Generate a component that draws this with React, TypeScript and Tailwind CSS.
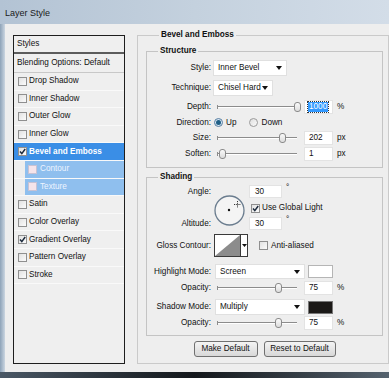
import React from 'react';

const STYLE_ROWS = [
  { name: 'Drop Shadow' },
  { name: 'Inner Shadow' },
  { name: 'Outer Glow' },
  { name: 'Inner Glow' },
  { name: 'Bevel and Emboss', checked: true, active: true },
  { name: 'Contour', sub: true },
  { name: 'Texture', sub: true },
  { name: 'Satin' },
  { name: 'Color Overlay' },
  { name: 'Gradient Overlay', checked: true },
  { name: 'Pattern Overlay' },
  { name: 'Stroke' },
];

function CheckBox({ checked = false, sub = false }: { checked?: boolean; sub?: boolean }) {
  return (
    <span
      className={`flex h-[9px] w-[9px] shrink-0 items-center justify-center border ${
        sub ? 'border-[#c7c2d4] bg-[#f5e4ea]' : 'border-[#8f8f8f] bg-gradient-to-br from-[#e2e2e2] to-[#fbfbfb]'
      }`}
    >
      {checked && (
        <svg width="7" height="7" viewBox="0 0 7 7">
          <path d="M1 3.6 L2.8 5.6 L6.2 1" fill="none" stroke="#1c2a3c" strokeWidth="1.5" />
        </svg>
      )}
    </span>
  );
}

function Radio({ on = false }: { on?: boolean }) {
  return (
    <span
      className={`flex h-[9px] w-[9px] shrink-0 items-center justify-center rounded-full border ${
        on ? 'border-[#5a7fa0] bg-[#d6e6f4]' : 'border-[#9a9a9a] bg-gradient-to-br from-[#dedede] to-[#fafafa]'
      }`}
    >
      {on && <span className="h-[5px] w-[5px] rounded-full bg-[#1f5f86]" />}
    </span>
  );
}

function Select({ value, width }: { value: string; width: string }) {
  return (
    <div className={`flex h-full items-center justify-between border border-[#e0e0e0] bg-white pl-[4px] pr-[4px] ${width}`}>
      <span>{value}</span>
      <svg width="6" height="4" viewBox="0 0 6 4">
        <path d="M0 0 H6 L3 4 Z" fill="#111" />
      </svg>
    </div>
  );
}

function Slider({ pos }: { pos: number }) {
  return (
    <div className="relative ml-[6px] h-full w-[80px]">
      <div className="absolute left-0 right-0 top-1/2 h-[2px] -translate-y-1/2 border-t border-[#8c8c8c] bg-white" />
      <div className="absolute left-0 top-1/2 h-[4px] w-[1px] -translate-y-1/2 bg-[#8c8c8c]" />
      <span
        className="absolute top-1/2 h-[10px] w-[7px] -translate-y-1/2 rounded-[3px] border border-[#8a8a8a] bg-gradient-to-b from-[#fafafa] to-[#dcdcdc]"
        style={{ left: pos - 3.5 }}
      />
    </div>
  );
}

function NumBox({ value, unit, selected = false }: { value: string; unit: string; selected?: boolean }) {
  return (
    <>
      <div className="ml-[7px] flex h-[14px] w-[29px] items-center border border-[#e3e3e3] bg-white pl-[3px]">
        <span className={selected ? 'bg-[#3399ff] px-[1px] text-white outline outline-1 outline-dotted outline-[#333]' : 'pl-[1px]'}>
          {value}
        </span>
      </div>
      <span className="ml-[4px]">{unit}</span>
    </>
  );
}

function Label({ children }: { children: React.ReactNode }) {
  return <span className="w-[64px] shrink-0 text-right">{children}</span>;
}

export default function App() {
  return (
    <div className="h-[378px] w-[389px] overflow-hidden bg-[#eeeeee] font-['Liberation_Sans',Arial,sans-serif] text-[8.2px] leading-[10px] text-[#111]">
      <div className="flex h-[24px] items-center bg-gradient-to-r from-[#b3c3d4] via-[#c4d1de] to-[#d3dde8] pl-[5px] text-[9px] text-[#1a1a1a]">
        <span className="mt-[2px]">Layer Style</span>
      </div>

      <div className="flex h-[348px]">
        <div className="w-[5px] shrink-0 bg-gradient-to-r from-[#8ea3b8] to-[#cbd6e1]" />

        {/* styles list */}
        <div className="ml-[8px] mt-[11px] flex h-[329px] w-[112px] shrink-0 flex-col border border-[#1e1e1e] bg-[#efefef]">
          <div className="flex h-[18px] shrink-0 items-center border-b-2 border-[#5c5c5c] pl-[3px]">Styles</div>
          <div className="flex h-[19px] shrink-0 items-center border-b border-[#c8c8c8] pl-[3px]">Blending Options: Default</div>
          {STYLE_ROWS.map((row) => (
            <div key={row.name} className={`h-[17.6px] shrink-0 border-b border-[#f9f9f9] ${row.sub ? 'bg-[#eeeeee] pl-[11px]' : ''}`}>
              <div
                className={`flex h-full items-center gap-[2px] ${
                  row.active ? 'bg-[#3a8ee6] pl-[4px] font-bold text-white' : row.sub ? 'bg-[#8fbfee] pl-[3px] text-[#eef4ff]' : 'pl-[4px]'
                }`}
              >
                <CheckBox checked={row.checked} sub={row.sub} />
                <span className={row.sub ? 'ml-[1px]' : ''}>{row.name}</span>
              </div>
            </div>
          ))}
        </div>

        <fieldset className="ml-[12px] mt-[6px] h-[334px] w-[252px] shrink-0 border border-[#cacaca] pl-[8px] pr-[5px]">
          <legend className="ml-[13px] px-[2px] font-bold">Bevel and Emboss</legend>

          <fieldset className="mt-[6px] h-[122px] border border-[#c4c4c4]">
            <legend className="ml-[11px] px-[2px] font-bold">Structure</legend>
            <div className="flex flex-col pt-[4px]">
              <div className="flex h-[16px] items-center">
                <Label>Style:</Label>
                <div className="ml-[2px] h-full">
                  <Select value="Inner Bevel" width="w-[74px]" />
                </div>
              </div>
              <div className="mt-[4px] flex h-[16px] items-center">
                <Label>Technique:</Label>
                <div className="ml-[2px] h-full">
                  <Select value="Chisel Hard" width="w-[60px]" />
                </div>
              </div>
              <div className="mt-[3px] flex h-[16px] items-center">
                <Label>Depth:</Label>
                <Slider pos={80} />
                <NumBox value="1000" unit="%" selected />
              </div>
              <div className="flex h-[15px] items-center">
                <Label>Direction:</Label>
                <span className="ml-[3px]">
                  <Radio on />
                </span>
                <span className="ml-[3px]">Up</span>
                <span className="ml-[13px]">
                  <Radio />
                </span>
                <span className="ml-[3px]">Down</span>
              </div>
              <div className="flex h-[16px] items-center">
                <Label>Size:</Label>
                <Slider pos={65} />
                <NumBox value="202" unit="px" />
              </div>
              <div className="flex h-[15px] items-center">
                <Label>Soften:</Label>
                <Slider pos={5} />
                <NumBox value="1" unit="px" />
              </div>
            </div>
          </fieldset>

          <fieldset className="mt-[4px] h-[164px] border border-[#c4c4c4]">
            <legend className="ml-[11px] px-[2px] font-bold">Shading</legend>
            <div className="flex flex-col">
              <div className="mt-[3px] flex">
                <div className="flex w-[64px] shrink-0 flex-col text-right">
                  <span className="h-[13px] leading-[13px]">Angle:</span>
                  <span className="mt-[19px] h-[13px] leading-[13px]">Altitude:</span>
                </div>
                <svg className="ml-[3px] mt-[10px]" width="31" height="31" viewBox="0 0 31 31">
                  <circle cx="15.5" cy="15.5" r="14.5" fill="#f4f4f4" stroke="#6a7c8e" strokeWidth="1.3" />
                  <circle cx="15" cy="15" r="1.2" fill="#111" />
                  <g stroke="#222" strokeWidth="0.9" strokeDasharray="1 0.8">
                    <path d="M23.5 6 V13" />
                    <path d="M20 9.5 H27" />
                  </g>
                </svg>
                <div className="ml-[4px] flex flex-col">
                  <div className="flex h-[13px] items-start">
                    <div className="flex h-[13px] w-[33px] items-center border border-[#e3e3e3] bg-white pl-[5px]">30</div>
                    <span className="ml-[4px] mt-[-2px]">°</span>
                  </div>
                  <div className="mt-[4px] flex h-[12px] items-center">
                    <span className="ml-[2px]">
                      <CheckBox checked />
                    </span>
                    <span className="ml-[2px]">Use Global Light</span>
                  </div>
                  <div className="mt-[3px] flex h-[13px] items-start">
                    <div className="flex h-[13px] w-[33px] items-center border border-[#e3e3e3] bg-white pl-[5px]">30</div>
                    <span className="ml-[4px] mt-[-2px]">°</span>
                  </div>
                </div>
              </div>

              <div className="mt-[4px] flex h-[23px] items-center">
                <Label>Gloss Contour:</Label>
                <div className="ml-[3px] flex h-full w-[34px] border border-[#3a3a3a] bg-white">
                  <svg width="25" height="21" viewBox="0 0 25 21">
                    <path d="M0 21 L25 0 L25 21 Z" fill="#8c8c8c" />
                  </svg>
                  <div className="flex flex-1 items-center justify-center border-l border-[#3a3a3a]">
                    <svg width="5" height="3" viewBox="0 0 5 3">
                      <path d="M0 0 H5 L2.5 3 Z" fill="#111" />
                    </svg>
                  </div>
                </div>
                <span className="ml-[11px]">
                  <CheckBox />
                </span>
                <span className="ml-[3px]">Anti-aliased</span>
              </div>

              <div className="mt-[7px] flex h-[15px] items-center">
                <Label>Highlight Mode:</Label>
                <div className="ml-[4px] h-full">
                  <Select value="Screen" width="w-[90px]" />
                </div>
                <span className="ml-[3px] h-[13px] w-[25px] border border-[#b5b5b5] bg-white" />
              </div>
              <div className="mt-[2px] flex h-[14px] items-center">
                <Label>Opacity:</Label>
                <Slider pos={61} />
                <NumBox value="75" unit="%" />
              </div>
              <div className="mt-[4px] flex h-[16px] items-center">
                <Label>Shadow Mode:</Label>
                <div className="ml-[4px] h-full">
                  <Select value="Multiply" width="w-[90px]" />
                </div>
                <span className="ml-[3px] h-[13px] w-[25px] border border-[#777] bg-[#1b1917]" />
              </div>
              <div className="mt-[1px] flex h-[14px] items-center">
                <Label>Opacity:</Label>
                <Slider pos={61} />
                <NumBox value="75" unit="%" />
              </div>
            </div>
          </fieldset>

          <div className="mt-[5px] flex h-[16px] justify-center gap-[6px]">
            <button className="w-[64px] rounded-[3px] border border-[#707070] bg-gradient-to-b from-[#f4f4f4] to-[#d8d8d8]">
              Make Default
            </button>
            <button className="w-[72px] rounded-[3px] border border-[#707070] bg-gradient-to-b from-[#f4f4f4] to-[#d8d8d8]">
              Reset to Default
            </button>
          </div>
        </fieldset>
      </div>

      <div className="h-[6px] bg-gradient-to-r from-[#4a5866] via-[#14181c] to-[#55626e]" />
    </div>
  );
}
